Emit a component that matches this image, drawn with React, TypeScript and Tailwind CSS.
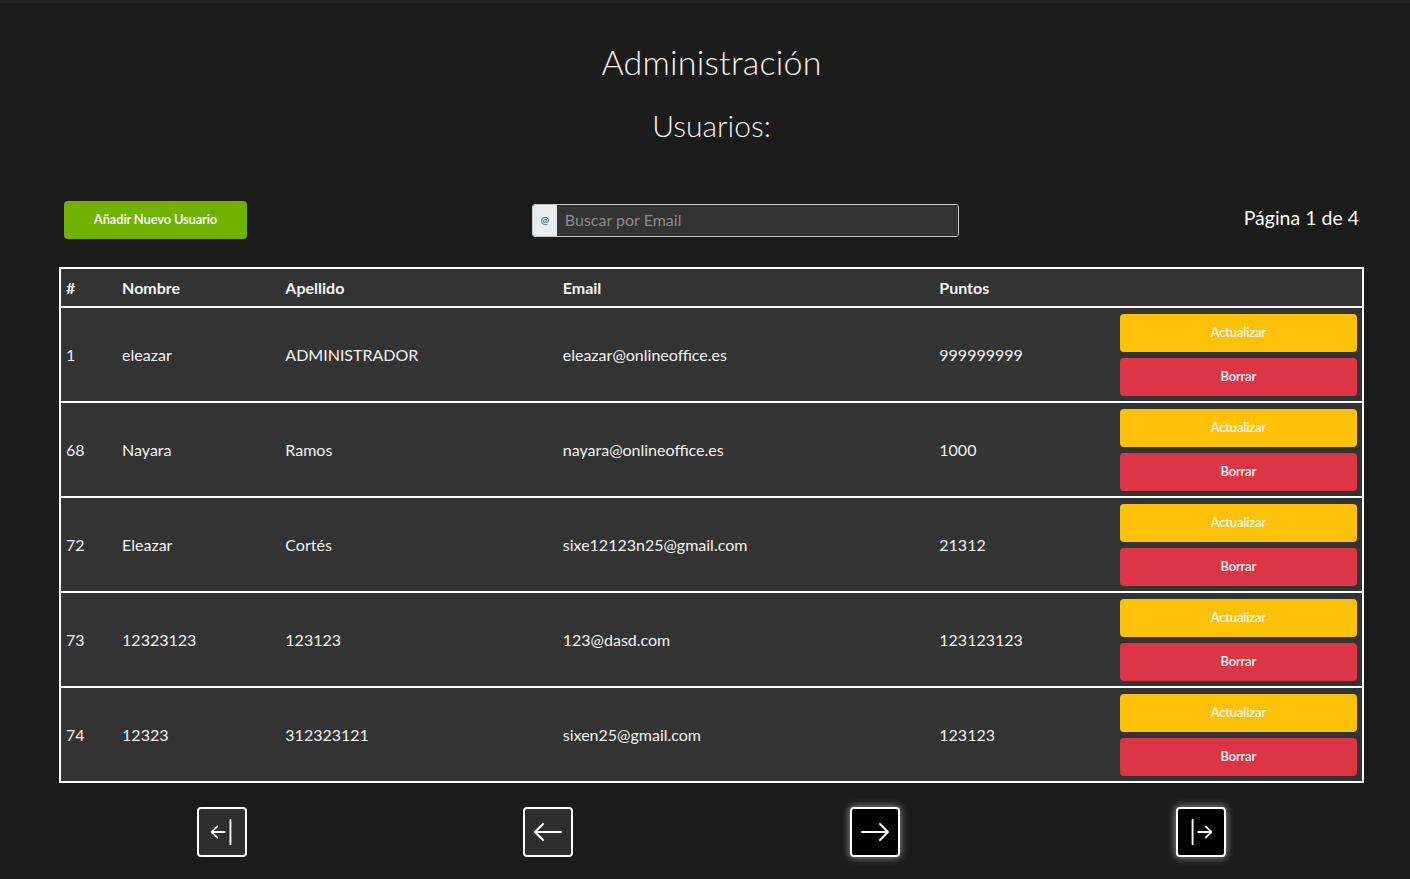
import { BsArrowBarLeft, BsArrowBarRight, BsArrowLeft, BsArrowRight } from "react-icons/bs";

const users = [
  { id: 1, nombre: "eleazar", apellido: "ADMINISTRADOR", email: "eleazar@onlineoffice.es", puntos: "999999999" },
  { id: 68, nombre: "Nayara", apellido: "Ramos", email: "nayara@onlineoffice.es", puntos: "1000" },
  { id: 72, nombre: "Eleazar", apellido: "Cortés", email: "sixe12123n25@gmail.com", puntos: "21312" },
  { id: 73, nombre: "12323123", apellido: "123123", email: "123@dasd.com", puntos: "123123123" },
  { id: 74, nombre: "12323", apellido: "312323121", email: "sixen25@gmail.com", puntos: "123123" },
];

export default function App() {
  return (
    <div className="min-h-[879px] border-t-[3px] border-[#232323] bg-[#1b1b1b] font-['Lato','Open_Sans',sans-serif] text-[#f4f4f4]">
      <div className="ml-[59px] w-[1305px] pt-[38px]">
        <h1 className="text-center text-[34px] font-light leading-[42px] tracking-[0.2px]">Administración</h1>
        <h2 className="mt-[24px] text-center text-[30px] font-light leading-[36px]">Usuarios:</h2>

        <div className="mt-[58px] flex items-center justify-between px-[5px]">
          <button className="h-[38px] w-[183px] rounded-[4px] bg-[#6fb300] text-[13px] font-bold tracking-[-0.2px] text-[#f2f2f2]">
            Añadir Nuevo Usuario
          </button>
          <div className="flex h-[33px] w-[427px] overflow-hidden rounded-[3px] border border-[#c8c8c8]">
            <span className="flex w-[24px] items-center justify-center bg-[#e9ecef] text-[10px] text-[#333]">@</span>
            <input
              placeholder="Buscar por Email"
              className="flex-1 bg-[#333333] px-[8px] text-[16px] text-white outline-none placeholder:text-[#8a8a8a]"
            />
          </div>
          <p className="-mt-[5px] text-[19.5px] text-white">Página 1 de 4</p>
        </div>

        <table className="mt-[28px] w-[1305px] table-fixed border-collapse border-2 border-white bg-[#333333] text-[16px]">
          <colgroup>
            <col className="w-[57px]" />
            <col className="w-[163px]" />
            <col className="w-[277px]" />
            <col className="w-[376px]" />
            <col className="w-[180px]" />
            <col className="w-[248px]" />
          </colgroup>
          <thead>
            <tr className="h-[39px] border-b-2 border-white text-left font-bold">
              <th className="pl-[5px]">#</th>
              <th className="pl-[5px]">Nombre</th>
              <th className="pl-[5px]">Apellido</th>
              <th className="pl-[5px]">Email</th>
              <th className="pl-[5px]">Puntos</th>
              <th></th>
            </tr>
          </thead>
          <tbody>
            {users.map((u) => (
              <tr key={u.id} className="border-b-2 border-white">
                <td className="pl-[5px]">{u.id}</td>
                <td className="pl-[5px]">{u.nombre}</td>
                <td className="pl-[5px]">{u.apellido}</td>
                <td className="pl-[5px]">{u.email}</td>
                <td className="pl-[5px]">{u.puntos}</td>
                <td className="pb-[5px] pl-[5px] pr-[5px] pt-[6px]">
                  <div className="flex flex-col gap-[6px]">
                    <button className="h-[38px] w-full rounded-[4px] bg-[#ffc107] text-[13px] font-semibold tracking-[-0.2px] text-[#f8f9fa]">
                      Actualizar
                    </button>
                    <button className="h-[38px] w-full rounded-[4px] bg-[#dc3545] text-[13px] font-semibold tracking-[-0.2px] text-[#f8f9fa]">
                      Borrar
                    </button>
                  </div>
                </td>
              </tr>
            ))}
          </tbody>
        </table>

        <div className="mt-[24px] grid grid-cols-4">
          <div className="flex justify-center">
            <button className="flex h-[50px] w-[50px] items-center justify-center rounded-[4px] border-2 border-white bg-[#2e2e2e] text-white">
              <BsArrowBarLeft size={30} />
            </button>
          </div>
          <div className="flex justify-center">
            <button className="flex h-[50px] w-[50px] items-center justify-center rounded-[4px] border-2 border-white bg-[#2e2e2e] text-white">
              <BsArrowLeft size={32} />
            </button>
          </div>
          <div className="flex justify-center">
            <button className="flex h-[50px] w-[50px] items-center justify-center rounded-[4px] border-2 border-white bg-black text-white shadow-[0_0_8px_rgba(255,255,255,0.6)]">
              <BsArrowRight size={32} />
            </button>
          </div>
          <div className="flex justify-center">
            <button className="flex h-[50px] w-[50px] items-center justify-center rounded-[4px] border-2 border-white bg-black text-white shadow-[0_0_8px_rgba(255,255,255,0.6)]">
              <BsArrowBarRight size={30} />
            </button>
          </div>
        </div>
      </div>
    </div>
  );
}
